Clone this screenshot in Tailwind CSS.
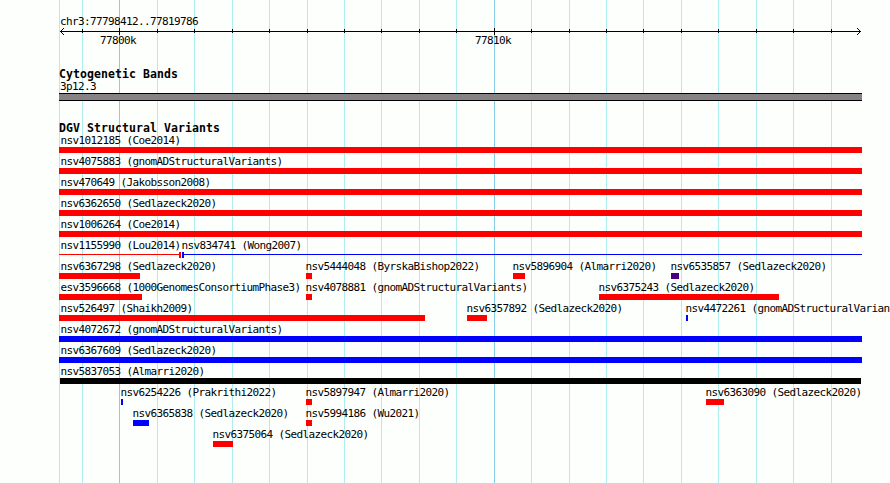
<!DOCTYPE html>
<html lang="en">
<head>
  <meta charset="UTF-8">
  <meta name="viewport" content="width=device-width, initial-scale=1.0">
  <title>chr3:77798412..77819786</title>
  <script src="https://cdn.jsdelivr.net/npm/@tailwindcss/browser@4"></script>
</head>
<body class="bg-[#fdfffc]">

  <div class="relative w-[890px] h-[483px] overflow-hidden pt-[15px] pl-[59px] font-['DejaVu_Sans_Mono',monospace] text-[11px] leading-[13px] tracking-[-0.622px] text-black whitespace-nowrap">

    <!-- Grid lines -->
    <svg id="grid" class="absolute inset-0" width="890" height="483" shape-rendering="crispEdges"></svg>

    <main class="relative">
      <!-- Scale -->
      <div class="pl-px h-[12px]">chr3:77798412..77819786</div>
      <svg id="axis" class="block h-[7px] w-[803px] overflow-visible" shape-rendering="crispEdges"></svg>
      <div class="flex h-[13px] pl-[41px]">
        <span class="w-[375px]">77800k</span>
        <span>77810k</span>
      </div>

      <!-- Cytogenetic bands -->
      <h2 class="mt-[21px] h-[12px] text-[11.5px] font-bold tracking-[0.077px]">Cytogenetic Bands</h2>
      <div class="pl-px h-[13px]">3p12.3</div>
      <div class="h-[8px] w-[803px] border-y border-black bg-[#868286]"></div>

      <!-- Structural variants -->
      <h2 class="mt-[21px] h-[12px] text-[11.5px] font-bold tracking-[0.077px]">DGV Structural Variants</h2>
      <div id="variants"></div>
    </main>
  </div>

  <script>
    const LEFT = 59;
    const major = [119, 494];
    const lines = [59, 82, 119, 157, 194, 232, 269, 307, 344, 381, 419, 456, 494,
                   531, 569, 606, 643, 681, 718, 756, 793, 831];

    document.getElementById("grid").innerHTML = lines.map(x =>
      `<rect x="${x}" y="0" width="1" height="483" fill="${major.includes(x) ? "#87ceeb" : "#afeeee"}"/>`
    ).join("");

    // axis line, ticks and arrow heads
    let axis = `<rect x="1" y="4" width="801" height="1"/>`;
    lines.slice(1).forEach(x => {
      const big = major.includes(x);
      axis += `<rect x="${x - LEFT}" y="${big ? 1 : 2}" width="1" height="${big ? 7 : 4}"/>`;
    });
    for (let i = 1; i <= 3; i++) {
      axis += `<rect x="${1 + i}" y="${4 - i}" width="1" height="1"/><rect x="${1 + i}" y="${4 + i}" width="1" height="1"/>`;
      axis += `<rect x="${801 - i}" y="${4 - i}" width="1" height="1"/><rect x="${801 - i}" y="${4 + i}" width="1" height="1"/>`;
    }
    document.getElementById("axis").innerHTML = axis;

    const RED = "bg-[#ff0000]", BLUE = "bg-[#0000ff]", PURPLE = "bg-[#4b0082]", BLACK = "bg-black";

    // [name, start, end, colour, breakpoint side]
    const rows = [
      [["nsv1012185 (Coe2014)", 59, 862, RED]],
      [["nsv4075883 (gnomADStructuralVariants)", 59, 862, RED]],
      [["nsv470649 (Jakobsson2008)", 59, 862, RED]],
      [["nsv6362650 (Sedlazeck2020)", 59, 862, RED]],
      [["nsv1006264 (Coe2014)", 59, 862, RED]],
      [["nsv1155990 (Lou2014)", 59, 181, RED, "end"], ["nsv834741 (Wong2007)", 182, 862, BLUE, "start"]],
      [["nsv6367298 (Sedlazeck2020)", 59, 140, RED], ["nsv5444048 (ByrskaBishop2022)", 306, 312, RED],
       ["nsv5896904 (Almarri2020)", 513, 525, RED], ["nsv6535857 (Sedlazeck2020)", 671, 679, PURPLE]],
      [["esv3596668 (1000GenomesConsortiumPhase3)", 59, 142, RED], ["nsv4078881 (gnomADStructuralVariants)", 306, 312, RED],
       ["nsv6375243 (Sedlazeck2020)", 599, 779, RED]],
      [["nsv526497 (Shaikh2009)", 59, 425, RED], ["nsv6357892 (Sedlazeck2020)", 467, 487, RED],
       ["nsv4472261 (gnomADStructuralVariants)", 686, 688, BLUE]],
      [["nsv4072672 (gnomADStructuralVariants)", 59, 862, BLUE]],
      [["nsv6367609 (Sedlazeck2020)", 59, 862, BLUE]],
      [["nsv5837053 (Almarri2020)", 60, 861, BLACK]],
      [["nsv6254226 (Prakrithi2022)", 121, 123, BLUE], ["nsv5897947 (Almarri2020)", 306, 312, RED],
       ["nsv6363090 (Sedlazeck2020)", 706, 724, RED]],
      [["nsv6365838 (Sedlazeck2020)", 133, 149, BLUE], ["nsv5994186 (Wu2021)", 306, 312, RED]],
      [["nsv6375064 (Sedlazeck2020)", 213, 233, RED]]
    ];

    function glyph(start, end, colour, side) {
      const size = `style="width:${end - start}px"`;
      if (!side) return `<div class="h-[6px] ${colour}" ${size}></div>`;
      const line = `<div class="mt-[2px] h-px grow ${colour}"></div>`;
      const block = `<div class="h-[6px] w-[2px] ${colour}"></div>`;
      return `<div class="flex h-[6px]" ${size}>${side === "end" ? line + block : block + line}</div>`;
    }

    document.getElementById("variants").innerHTML = rows.map(row =>
      `<div class="grid h-[21px] grid-cols-1">` +
      row.map(([name, start, end, colour, side]) => {
        const label = start <= 60 ? 60.4 - start : -0.6;
        return `<div class="col-start-1 row-start-1" style="margin-left:${start - LEFT}px">
          <div class="h-[13px]" style="margin-left:${label}px">${name}</div>
          ${glyph(start, end, colour, side)}
        </div>`;
      }).join("") + `</div>`
    ).join("");
  </script>
</body>
</html>
